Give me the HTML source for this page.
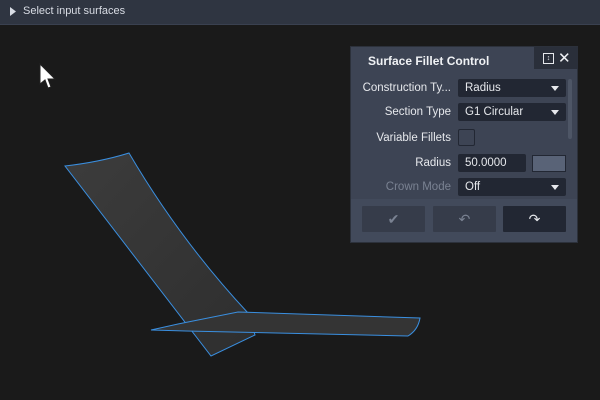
<!DOCTYPE html>
<html><head><style>
body{margin:0;width:600px;height:400px;overflow:hidden;background:#1a1a1a;font-family:"Liberation Sans",sans-serif;position:relative}
.top{position:absolute;left:0;top:0;width:600px;height:24px;background:#2f3541;border-bottom:1px solid #3a4150}
.top span{position:absolute;left:23px;top:5px;font-size:11px;color:#d8dce4}
.panel{position:absolute;left:350px;top:46px;width:228px;height:197px;background:#3d4454;border:1px solid #2c313b;box-sizing:border-box}
.lbl{position:absolute;font-size:11.5px;color:#e6e8ec;text-align:right;width:100px;left:0}
.dd{position:absolute;left:107px;width:108px;height:18px;background:#222733;border-radius:2px;color:#e6e8ec;font-size:11.5px;line-height:18px;padding-left:7px;box-sizing:border-box}
.dd:after{content:"";position:absolute;right:7px;top:7px;border:4px solid transparent;border-top:5px solid #e6e8ec;border-bottom:0}
.btn{position:absolute;top:159px;height:26px;width:63px;background:#363c4a;border-radius:1px}
</style></head><body>
<div class="top"><svg style="position:absolute;left:10px;top:7px" width="6" height="9"><path d="M0 0L6 4.5L0 9Z" fill="#d8dce4"/></svg><span>Select input surfaces</span></div>
<svg style="position:absolute;left:38px;top:62px" width="20" height="28"><path d="M2 2L2 22L7 18L10 26L13 25L10 17L17 17Z" fill="#fff" stroke="#222" stroke-width="1"/></svg>
<svg style="position:absolute;left:0;top:0" width="600" height="400">
<defs><linearGradient id="g" x1="0" y1="0" x2="1" y2="1"><stop offset="0" stop-color="#3c3c3c"/><stop offset="1" stop-color="#2e2e2e"/></linearGradient></defs>
<path d="M65 166Q100 162 129 153Q180 240 248 313L255 335L211 356Z" fill="url(#g)" stroke="#3a8fe0" stroke-width="1"/>
<path d="M151 330L178 324L238 312L420 318Q418 330 408 336L186 331Z" fill="#343434" stroke="#3a8fe0" stroke-width="1"/>
</svg>
<div class="panel">
<div style="position:absolute;left:183px;top:0;width:44px;height:22px;background:#2a2f3a"></div>
<div style="position:absolute;left:17px;top:7px;font-size:12px;font-weight:bold;color:#f0f2f5">Surface Fillet Control</div>
<div style="position:absolute;left:192px;top:6px;width:9px;height:9px;border:1px solid #e6e8ec;font-size:7px;color:#e6e8ec;text-align:center;line-height:9px">↕</div>
<div style="position:absolute;left:207px;top:2px;font-size:15px;color:#f0f2f5">✕</div>
<div class="lbl" style="top:35px">Construction Ty...</div><div class="dd" style="top:32px">Radius</div>
<div class="lbl" style="top:59px">Section Type</div><div class="dd" style="top:56px">G1 Circular</div>
<div class="lbl" style="top:85px">Variable Fillets</div>
<div style="position:absolute;left:107px;top:82px;width:17px;height:17px;border:1px solid #222733;box-sizing:border-box;background:#3d4454;border-radius:2px"></div>
<div class="lbl" style="top:110px">Radius</div>
<div style="position:absolute;left:107px;top:107px;width:68px;height:18px;background:#222733;color:#e6e8ec;font-size:11.5px;line-height:18px;padding-left:7px;box-sizing:border-box;border-radius:2px">50.0000</div>
<div style="position:absolute;left:181px;top:108px;width:34px;height:17px;background:#596377;border:1px solid #222733;box-sizing:border-box"></div>
<div class="lbl" style="top:134px;color:#7a8292">Crown Mode</div><div class="dd" style="top:131px;color:#e6e8ec">Off</div>
<div style="position:absolute;left:217px;top:32px;width:4px;height:60px;background:#4e5666;border-radius:2px"></div>
<div style="position:absolute;left:0;top:152px;width:226px;height:43px;background:#424a5b"></div>
<div class="btn" style="left:11px;color:#7a8292;text-align:center;line-height:26px;font-size:14px">✔</div>
<div class="btn" style="left:82px;color:#7a8292;text-align:center;line-height:26px;font-size:14px">↶</div>
<div class="btn" style="left:152px;background:#222733;color:#e6e8ec;text-align:center;line-height:26px;font-size:14px">↷</div>
</div>
</body></html>
